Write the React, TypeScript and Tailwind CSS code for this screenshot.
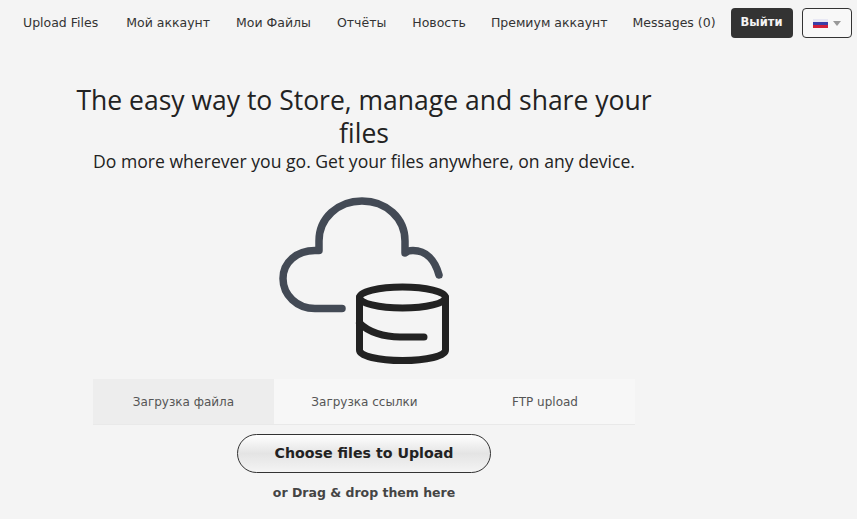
export default function App() {
  const nav = [
    { label: "Upload Files", cls: "pl-[13px] pr-[15px]" },
    { label: "Мой аккаунт", cls: "px-[13px]" },
    { label: "Мои Файлы", cls: "px-[13px]" },
    { label: "Отчёты", cls: "px-[13px]" },
    { label: "Новость", cls: "pl-[13px] pr-[12px]" },
    { label: "Премиум аккаунт", cls: "pl-[13px] pr-[12px]" },
    { label: "Messages (0)", cls: "px-[13px]" },
  ];
  return (
    <div className="h-[519px] w-[857px] overflow-hidden bg-[#f4f4f4] font-['Open_Sans','Noto_Sans',sans-serif]">
      <nav className="flex h-[46px] items-center pl-[10px] font-['DejaVu_Sans',sans-serif] text-[12.5px] text-[#333333]">
        <div className="flex">
          {nav.map((n) => (
            <a key={n.label} className={`${n.cls} whitespace-nowrap`}>{n.label}</a>
          ))}
        </div>
        <button className="ml-[2px] h-[30px] w-[62px] rounded-[4px] bg-[#333333] text-[11.5px] font-bold text-[#f4f4f4]">Выйти</button>
        <button className="ml-[9px] flex h-[30px] w-[50px] items-center justify-center gap-[5px] rounded-[4px] border border-[#333333] bg-[#f8f8f8]">
          <span className="flex h-[9px] w-[15px] flex-col">
            <span className="h-[3px] bg-[#e8e8f4]" />
            <span className="h-[3px] bg-[#3a3fa8]" />
            <span className="h-[3px] bg-[#d0203a]" />
          </span>
          <span className="h-0 w-0 border-x-[4px] border-t-[5px] border-x-transparent border-t-[#999999]" />
        </button>
      </nav>
      <main className="ml-[64px] flex w-[600px] flex-col items-center">
        <h1 className="mt-[38px] w-[600px] text-center text-[26.500px] leading-[33px] font-normal text-[#222222]">
          The easy way to Store, manage and share your files
        </h1>
        <p className="text-center text-[17.600px] leading-[22px] text-[#222222]">
          Do more wherever you go. Get your files anywhere, on any device.
        </p>
        <svg width="210" height="190" viewBox="260 185 210 190" fill="none" strokeLinecap="round" strokeLinejoin="round" className="mt-[13px] ml-[2px] shrink-0">
          <path d="M342 308.5H315C297 308.5 283 295 283 278.5C283 262 297 250.5 315 250.5H319V241C319 218 338 201 362 201C386 201 405 218 405 241V253C407 251 410 250.5 413 250.5C426 250.5 435 260 439 275" stroke="#434a55" strokeWidth="7.500" />
          <g stroke="#222222" strokeWidth="7">
            <ellipse cx="402.500" cy="297.500" rx="43" ry="10.500" />
            <path d="M359.500 297.500V350C359.500 356 378 360.500 402.500 360.500C427 360.500 445.500 356 445.500 350V297.500" />
            <path d="M359.500 323C368 332 384 337 400 337H424" />
          </g>
        </svg>
        <div className="mt-[4px] flex h-[46px] w-[542px] border-b border-[#e9e9e9] bg-[#f7f7f7] font-['DejaVu_Sans',sans-serif] text-[12px] text-[#555555]">
          <div className="flex w-[181px] items-center justify-center bg-[#ededed]">Загрузка файла</div>
          <div className="flex w-[181px] items-center justify-center">Загрузка ссылки</div>
          <div className="flex w-[180px] items-center justify-center">FTP upload</div>
        </div>
        <button className="mt-[9px] h-[39px] w-[254px] rounded-full border border-[#333333] bg-gradient-to-b from-[#ffffff] via-[#e4e4e4] to-[#f4f4f4] pt-[1px] font-['DejaVu_Sans',sans-serif] text-[14.200px] font-bold text-[#222222]">
          Choose files to Upload
        </button>
        <p className="mt-[11px] font-['DejaVu_Sans',sans-serif] text-[12.500px] font-bold text-[#444444]">or Drag &amp; drop them here</p>
      </main>
    </div>
  );
}
